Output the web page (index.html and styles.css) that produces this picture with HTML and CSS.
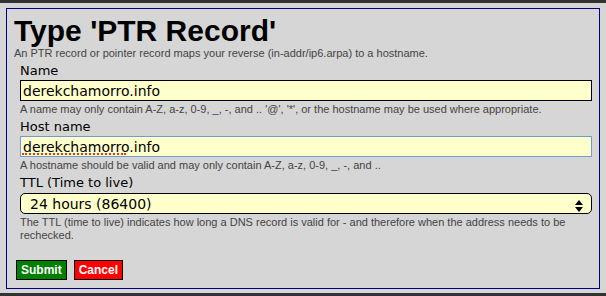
FILE: index.html
```html
<!DOCTYPE html>
<html lang="en">
<head>
    <meta charset="UTF-8">
    <meta name="viewport" content="width=device-width, initial-scale=1.0">
    <title>Type 'PTR Record'</title>
    <link rel="stylesheet" href="styles.css">
</head>
<body>
    <div class="topbar"></div>
    <div class="panel">
        <h1>Type 'PTR Record'</h1>
        <p class="intro">An PTR record or pointer record maps your reverse (in-addr/ip6.arpa) to a hostname.</p>
        <form class="record-form">
            <div class="field">
                <label for="name">Name</label>
                <input type="text" id="name" value="derekchamorro.info">
                <div class="help">A name may only contain A-Z, a-z, 0-9, _, -, and .. '@', '*', or the hostname may be used where appropriate.</div>
            </div>
            <div class="field">
                <label for="host">Host name</label>
                <div class="input-wrap">
                    <input type="text" id="host" class="focused" value="derekchamorro.info" spellcheck="false">
                    <span class="spell"></span>
                </div>
                <div class="help">A hostname should be valid and may only contain A-Z, a-z, 0-9, _, -, and ..</div>
            </div>
            <div class="field">
                <label for="ttl">TTL (Time to live)</label>
                <div class="select-wrap">
                    <select id="ttl">
                        <option>24 hours (86400)</option>
                    </select>
                    <svg class="arrows" width="8" height="12" viewBox="0 0 8 12">
                        <path d="M4 0 L8 5 L0 5 Z" fill="#000"/>
                        <path d="M0 7 L8 7 L4 12 Z" fill="#000"/>
                    </svg>
                </div>
                <div class="help">The TTL (time to live) indicates how long a DNS record is valid for - and therefore when the address needs to be rechecked.</div>
            </div>
            <div class="buttons">
                <button type="button" class="btn submit">Submit</button>
                <button type="button" class="btn cancel">Cancel</button>
            </div>
        </form>
    </div>
    <div class="bottombar"></div>
</body>
</html>
```
FILE: styles.css
```css
html, body {
    margin: 0;
    padding: 0;
    height: 296px;
    overflow: hidden;
}
body {
    background-color: #d6d6d6;
    font-family: "Liberation Sans", Arial, sans-serif;
    display: flex;
    flex-direction: column;
}
.topbar {
    height: 3px;
    background-color: #333;
}
.bottombar {
    margin-top: auto;
    height: 3px;
    background-color: #333;
}
.panel {
    margin: 5px 6px 0 6px;
    border: 1px solid #000080;
    padding: 0 7px 8px 7px;
}
h1 {
    font-size: 30px;
    line-height: 32px;
    font-weight: bold;
    color: #000;
    margin: 6px 0 0 0;
}
.intro {
    font-size: 11px;
    line-height: 13px;
    color: #444;
    margin: 0;
}
.record-form {
    padding-left: 6px;
    padding-right: 0;
}
.field label {
    display: block;
    font-family: "DejaVu Sans", sans-serif;
    font-size: 13px;
    line-height: 15px;
    color: #000;
    margin-top: 3px;
}
.field input,
.field select {
    display: block;
    box-sizing: border-box;
    width: 100%;
    height: 21px;
    margin: 2px 0 0 0;
    padding: 0 2px;
    font-family: "DejaVu Sans", sans-serif;
    font-size: 14px;
    color: #000;
    background-color: #ffffcc;
    border: 1px solid #000;
    border-radius: 0;
    outline: none;
}
.input-wrap {
    position: relative;
}
.field input.focused {
    border-color: #6f9ccd;
}
.spell {
    position: absolute;
    left: 2px;
    top: 17px;
    width: 104px;
    border-bottom: 2px dotted #e0352f;
}
.select-wrap {
    position: relative;
}
.field select {
    -webkit-appearance: none;
    appearance: none;
    border-radius: 5px;
    padding-left: 9px;
    margin-top: 3px;
}
.arrows {
    position: absolute;
    right: 9px;
    top: 7px;
}
.help {
    font-size: 11px;
    line-height: 13px;
    color: #444;
    margin-top: 2px;
}
.buttons {
    margin: 18px 0 0 -4px;
    display: flex;
    gap: 7px;
}
.btn {
    font-family: "Liberation Sans", Arial, sans-serif;
    font-size: 12px;
    font-weight: bold;
    color: #fff;
    border: 1px solid #000;
    border-radius: 0;
    height: 20px;
    padding: 0 4px;
    cursor: pointer;
}
.submit {
    background-color: #008000;
}
.cancel {
    background-color: #ff0000;
}
```
